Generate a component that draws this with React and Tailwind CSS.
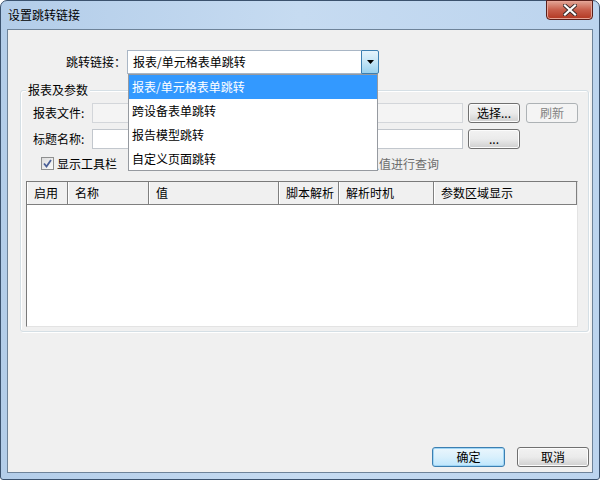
import React from 'react'

const linkTypes = ['报表/单元格表单跳转', '跨设备表单跳转', '报告模型跳转', '自定义页面跳转']

const columns = [
  { title: '启用', cls: 'w-[41px]' },
  { title: '名称', cls: 'w-[81px]' },
  { title: '值', cls: 'w-[130px]' },
  { title: '脚本解析', cls: 'w-[60px]' },
  { title: '解析时机', cls: 'w-[95px]' },
  { title: '参数区域显示', cls: 'flex-1' },
]

const WinButton = ({ children, className = '', disabled = false, focused = false }) => (
  <button
    type="button"
    className={
      'h-[20px] rounded-[3px] border text-[12px] leading-[14px] flex items-center justify-center ' +
      (disabled
        ? 'border-[#adb2b5] bg-[#f4f4f4] text-[#838383] '
        : focused
          ? 'border-[#3c7fb1] bg-gradient-to-b from-[#eaf6fd] via-[#d9f0fc] to-[#bee6fd] text-black shadow-[inset_0_0_0_1px_#9fd5f5] '
          : 'border-[#707070] bg-gradient-to-b from-[#f2f2f2] via-[#ebebeb] to-[#cfcfcf] text-black shadow-[inset_0_0_0_1px_#fcfcfc] ') +
      className
    }
  >
    {children}
  </button>
)

const CheckBox = ({ checked }) => (
  <div className="w-[13px] h-[13px] border border-[#8e8f8f] bg-gradient-to-br from-[#dcdcdc] to-[#fbfbfb] flex items-center justify-center">
    {checked && (
      <svg width="9" height="9" viewBox="0 0 9 9">
        <path d="M1 4.5 L3.5 7.5 L8 1" fill="none" stroke="#4a5f97" strokeWidth="1.8" />
      </svg>
    )}
  </div>
)

export default function App() {
  return (
    <div className="w-[600px] h-[480px] bg-white font-['Noto_Sans_CJK_SC',sans-serif] text-[12px] leading-[14px] text-black">
      <div className="relative w-[600px] h-[480px] rounded-t-[7px] rounded-b-[3px] border border-[#3b526e] bg-gradient-to-r from-[#b3cde9] via-[#c6dbf1] to-[#bcd4ee] flex flex-col">
        {/* title bar */}
        <div className="h-[28px] flex items-center pl-[7px] text-[12px] text-black">设置跳转链接</div>
        <button
          type="button"
          className="absolute top-[-1px] right-[6px] w-[47px] h-[20px] rounded-b-[4px] border border-[#5a1f1a] bg-gradient-to-b from-[#e2a596] via-[#c75d4a] to-[#b23620] flex items-center justify-center shadow-[inset_0_0_0_1px_#e7a496]"
        >
          <svg width="14" height="12" viewBox="0 0 14 12">
            <path d="M2 1.5 L12 10.5 M12 1.5 L2 10.5" stroke="#3a2a2a" strokeWidth="4" strokeLinecap="square" />
            <path d="M2 1.5 L12 10.5 M12 1.5 L2 10.5" stroke="#ffffff" strokeWidth="2.2" strokeLinecap="square" />
          </svg>
        </button>

        {/* client area */}
        <div className="mx-[6px] h-[444px] border border-[#6e8399] bg-[#f0f0f0] flex flex-col">
          {/* combo row */}
          <div className="mt-[20px] flex items-center pl-[58px]">
            <span className="w-[61px] text-right pr-[1px]">跳转链接：</span>
            <div className="relative w-[252px] h-[24px] flex">
              <div className="flex-1 h-full bg-white border border-r-0 border-[#a9b6c5] flex items-center pl-[5px]">
                报表/单元格表单跳转
              </div>
              <div className="w-[18px] h-full border border-[#3c7fb1] rounded-r-[2px] bg-gradient-to-b from-[#e5f4fc] via-[#c4e5f6] to-[#98d1ef] flex items-center justify-center">
                <svg width="7" height="4" viewBox="0 0 7 4">
                  <path d="M0 0 H7 L3.5 4 Z" fill="#000" />
                </svg>
              </div>
              {/* open dropdown list */}
              <div className="absolute z-10 top-full left-[1px] w-[250px] h-[97px] bg-white border border-[#969aa0]">
                {linkTypes.map((t, i) => (
                  <div
                    key={t}
                    className={'h-[24px] flex items-center pl-[3px] ' + (i === 0 ? 'bg-[#3399ff] text-white' : '')}
                  >
                    {t}
                  </div>
                ))}
              </div>
            </div>
          </div>

          {/* group box */}
          <div className="relative mt-[16px] ml-[12px] mr-[3px] h-[242px] rounded-[3px] border border-[#d5dfe5] shadow-[inset_1px_1px_0_#ffffff,1px_1px_0_#ffffff] flex flex-col">
            <span className="absolute -top-[8px] left-[5px] px-[2px] bg-[#f0f0f0]">报表及参数</span>

            <div className="mt-[12px] flex items-center pl-[12px]">
              <span className="w-[59px]">报表文件:</span>
              <div className="w-[371px] h-[20px] border border-[#d3d6da] bg-[#f4f4f4]" />
              <WinButton className="ml-[5px] w-[52px] h-[19px]">选择...</WinButton>
              <WinButton className="ml-[6px] w-[52px] h-[19px]" disabled>刷新</WinButton>
            </div>

            <div className="mt-[6px] flex items-center pl-[12px]">
              <span className="w-[59px]">标题名称:</span>
              <div className="w-[371px] h-[20px] border border-[#c2c7cd] bg-white" />
              <WinButton className="ml-[5px] w-[52px] h-[19px]">...</WinButton>
            </div>

            <div className="mt-[8px] flex items-center pl-[20px] h-[13px]">
              <CheckBox checked />
              <span className="ml-[3px]">显示工具栏</span>
              <div className="ml-[173px] flex items-center">
                <CheckBox />
                <span className="ml-[4px] text-[#6d6d6d]">使用参数默认值进行查询</span>
              </div>
            </div>

            {/* parameter table */}
            <div className="mt-[11px] ml-[5px] w-[552px] h-[146px] border border-t-[#7a7a7a] border-l-[#7a7a7a] border-r-[#e3e3e3] border-b-[#e3e3e3] bg-white flex flex-col">
              <div className="h-[23px] flex bg-[#f0f0f0] border-b border-[#7f7f7f]">
                {columns.map((c) => (
                  <div key={c.title} className={c.cls + ' h-full flex items-center pl-[6px] border-r border-[#7f7f7f] border-l border-l-white'}>
                    {c.title}
                  </div>
                ))}
              </div>
              <div className="flex-1" />
            </div>
          </div>

          {/* dialog buttons */}
          <div className="mt-auto mb-[5px] mr-[3px] flex justify-end gap-[12px]">
            <WinButton focused className="w-[73px]">确定</WinButton>
            <WinButton className="w-[72px]">取消</WinButton>
          </div>
        </div>
      </div>
    </div>
  )
}
